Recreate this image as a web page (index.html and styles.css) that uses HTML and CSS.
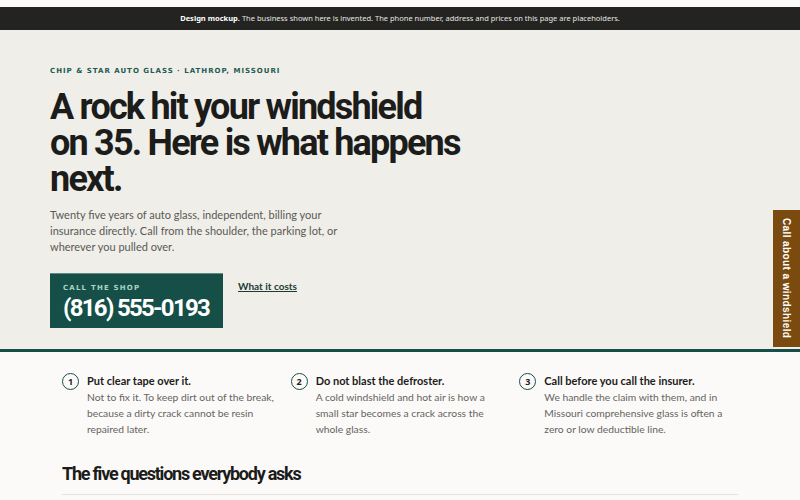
FILE: index.html
```html
<!DOCTYPE html>
<html lang="en">
<head>
    <meta charset="UTF-8">
    <meta name="viewport" content="width=device-width, initial-scale=1.0">
    <title>Chip &amp; Star Auto Glass</title>
    <link rel="stylesheet" href="styles.css">
</head>
<body>
    <div class="notice"><b>Design mockup.</b> The business shown here is invented. The phone number, address and prices on this page are placeholders.</div>

    <header class="hero">
        <p class="eyebrow">Chip &amp; Star Auto Glass · Lathrop, Missouri</p>
        <h1>A rock hit your windshield<br> on 35. Here is what happens next.</h1>
        <p class="lede">Twenty five years of auto glass, independent, billing your insurance directly. Call from the shoulder, the parking lot, or wherever you pulled over.</p>
        <div class="actions">
            <a class="call-btn" href="#">
                <span class="call-label">Call the shop</span>
                <span class="call-number">(816) 555-0193</span>
            </a>
            <a class="costs" href="#">What it costs</a>
        </div>
    </header>

    <a class="side-tab" href="#">Call about a windshield</a>

    <main class="content">
        <ol class="steps">
            <li class="step">
                <span class="step-num">1</span>
                <div>
                    <h3>Put clear tape over it.</h3>
                    <p>Not to fix it. To keep dirt out of the break, because a dirty crack cannot be resin repaired later.</p>
                </div>
            </li>
            <li class="step">
                <span class="step-num">2</span>
                <div>
                    <h3>Do not blast the defroster.</h3>
                    <p>A cold windshield and hot air is how a small star becomes a crack across the whole glass.</p>
                </div>
            </li>
            <li class="step">
                <span class="step-num">3</span>
                <div>
                    <h3>Call before you call the insurer.</h3>
                    <p>We handle the claim with them, and in Missouri comprehensive glass is often a zero or low deductible line.</p>
                </div>
            </li>
        </ol>

        <h2>The five questions everybody asks</h2>
        <hr class="rule">
    </main>
</body>
</html>
```

FILE: styles.css
```css
body { margin: 0; padding-top: 7px; background: #fbfaf8; font-family: Lato, "Noto Sans", Arial, sans-serif; color: #222; }

.notice { background: #232322; color: #e8e6e1; font-family: "Noto Sans", sans-serif; font-size: 7.5px; height: 23px; line-height: 23px; text-align: center; }
.notice b { color: #fff; }

.hero { background: #efeee9; padding: 36px 50px 0; border-bottom: 3px solid #164f48; height: 283px; }
.eyebrow { margin: 0; font-family: "DejaVu Sans", sans-serif; font-weight: bold; font-size: 7px; line-height: 10px; letter-spacing: 1px; text-transform: uppercase; color: #1e5a52; }
h1 { margin: 13px 0 0; width: 440px; font-family: Roboto, sans-serif; font-weight: bold; font-size: 36px; line-height: 36px; letter-spacing: -1.8px; color: #1c1c1a; }
.lede { margin: 10px 0 0; width: 296px; font-size: 11px; line-height: 16px; color: #5a5955; }

.actions { display: flex; align-items: flex-start; gap: 15px; margin-top: 18px; }
.call-btn { box-sizing: border-box; display: flex; flex-direction: column; width: 173px; height: 55px; padding: 9px 13px 0; background: #164f48; border-top: 1px solid #5f8b83; text-decoration: none; }
.call-label { font-family: "DejaVu Sans", sans-serif; font-weight: bold; font-size: 7px; line-height: 10px; letter-spacing: 1.2px; text-transform: uppercase; color: #a8d4c4; }
.call-number { margin-top: 1px; white-space: nowrap; font-family: Roboto, sans-serif; font-weight: bold; font-size: 24px; line-height: 28px; letter-spacing: -1.7px; color: #fff; }
.costs { margin-top: 7px; font-weight: bold; font-size: 10px; color: #1d3a35; }

.side-tab { position: fixed; right: 0; top: 210px; width: 27px; height: 137px; display: flex; align-items: center; justify-content: center; background: #7b4a0f; color: #fff; writing-mode: vertical-rl; font-family: "Liberation Sans", Arial, sans-serif; font-weight: bold; font-size: 10px; letter-spacing: 0.4px; text-decoration: none; }

.content { padding: 21px 62px 0; }
.steps { list-style: none; margin: 0; padding: 0; display: grid; grid-template-columns: repeat(3, 1fr); gap: 0 10px; }
.step { display: flex; gap: 8px; }
.step-num { flex: none; width: 15px; height: 15px; border: 1.5px solid #164f48; border-radius: 50%; display: flex; align-items: center; justify-content: center; font-family: "Noto Sans", sans-serif; font-size: 9px; font-weight: bold; }
.step h3 { margin: 0; font-size: 11px; line-height: 16px; color: #1c1c1a; }
.step p { margin: 0; font-size: 10.3px; line-height: 16px; color: #66645f; }

h2 { margin: 26px 0 0; font-family: Roboto, sans-serif; font-weight: bold; font-size: 18px; line-height: 21px; letter-spacing: -1.25px; color: #1c1c1a; }
.rule { margin: 10px 0 0; border: 0; border-top: 1px solid #e4e2dd; }
```
